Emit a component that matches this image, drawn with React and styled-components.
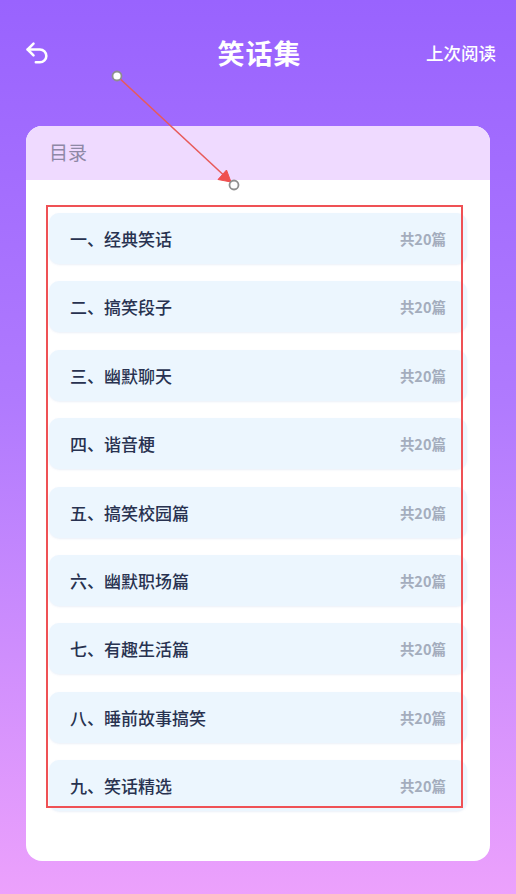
import React from 'react'
import styled, { createGlobalStyle } from 'styled-components';

const chapters = [
    '一、经典笑话',
    '二、搞笑段子',
    '三、幽默聊天',
    '四、谐音梗',
    '五、搞笑校园篇',
    '六、幽默职场篇',
    '七、有趣生活篇',
    '八、睡前故事搞笑',
    '九、笑话精选',
];

function BackIcon() {
    return (
        <svg width="28" height="28" viewBox="0 0 24 24" fill="none" stroke="#fff" strokeWidth="2.2" strokeLinecap="round" strokeLinejoin="round">
            <path d="M9 14 4 9l5-5" />
            <path d="M4 9h10.5a5.5 5.5 0 0 1 0 11H11" />
        </svg>
    )
}

function App() {
    return (
        <Page>
            <Global />
            <Header>
                <Back><BackIcon /></Back>
                <Title>笑话集</Title>
                <LastRead>上次阅读</LastRead>
            </Header>

            <Card>
                <CardHead>目录</CardHead>
                <List>
                    {chapters.map(name =>
                        <Row key={name}>
                            <Name>{name}</Name>
                            <Count>共20篇</Count>
                        </Row>
                    )}
                </List>
            </Card>

            <Marker />
            <Pointer viewBox="0 0 516 894" width="516" height="894">
                <line x1="117" y1="76" x2="230" y2="181" stroke="#e85a5a" strokeWidth="1.6" />
                <path d="M231 182 L218 179.5 L226.5 170 Z" fill="#ef4f4f" stroke="#ef4f4f" strokeWidth="1" strokeLinejoin="round" />
                <circle cx="117" cy="76" r="4.5" fill="#fff" stroke="#8f8f8f" strokeWidth="1.8" />
                <circle cx="234" cy="185" r="4.5" fill="none" stroke="#8f8f8f" strokeWidth="1.8" />
            </Pointer>
        </Page>
    )
}

export default App

const Global = createGlobalStyle `
body {
    margin: 0;
    font-family: "Noto Sans CJK SC", "Noto Sans", sans-serif;
}
`

const Page = styled.div `
position: relative;
width: 516px;
height: 894px;
overflow: hidden;
background: linear-gradient(180deg, #9963fe 0%, #b07afe 45%, #eca1fc 100%);
`

const Header = styled.header `
height: 126px;
display: grid;
grid-template-columns: 1fr auto 1fr;
align-items: start;
padding: 34px 20px 0 23px;
box-sizing: border-box;
color: #fff;
`

const Back = styled.div `
display: flex;
align-items: center;
height: 38px;
`

const Title = styled.h1 `
margin: 0;
font-size: 27px;
line-height: 38px;
font-weight: 700;
letter-spacing: 1px;
`

const LastRead = styled.div `
justify-self: end;
font-size: 17.5px;
line-height: 38px;
font-weight: 500;
`

const Card = styled.section `
margin: 0 26px;
height: 735px;
background: #fff;
border-radius: 16px;
overflow: hidden;
`

const CardHead = styled.div `
height: 54px;
background: #efdaff;
display: flex;
align-items: center;
padding: 0 0 4px 23px;
box-sizing: border-box;
font-size: 19px;
color: #8e88a6;
`

const List = styled.div `
display: flex;
flex-direction: column;
gap: 17.4px;
padding: 33px 23px 0 23px;
`

const Row = styled.div `
height: 51px;
display: flex;
align-items: center;
justify-content: space-between;
padding: 0 21px 0 21px;
background: #ecf6fe;
border-radius: 10px;
box-shadow: 0 1px 2px rgba(180, 200, 230, 0.25);
`

const Name = styled.span `
font-size: 17px;
font-weight: 500;
color: #283250;
`

const Count = styled.span `
font-size: 14.5px;
font-weight: 700;
color: #a4adbd;
`

const Marker = styled.div `
position: absolute;
left: 46px;
top: 205px;
width: 417px;
height: 603px;
box-sizing: border-box;
border: 2px solid #ef5155;
pointer-events: none;
`

const Pointer = styled.svg `
position: absolute;
left: 0;
top: 0;
pointer-events: none;
`
